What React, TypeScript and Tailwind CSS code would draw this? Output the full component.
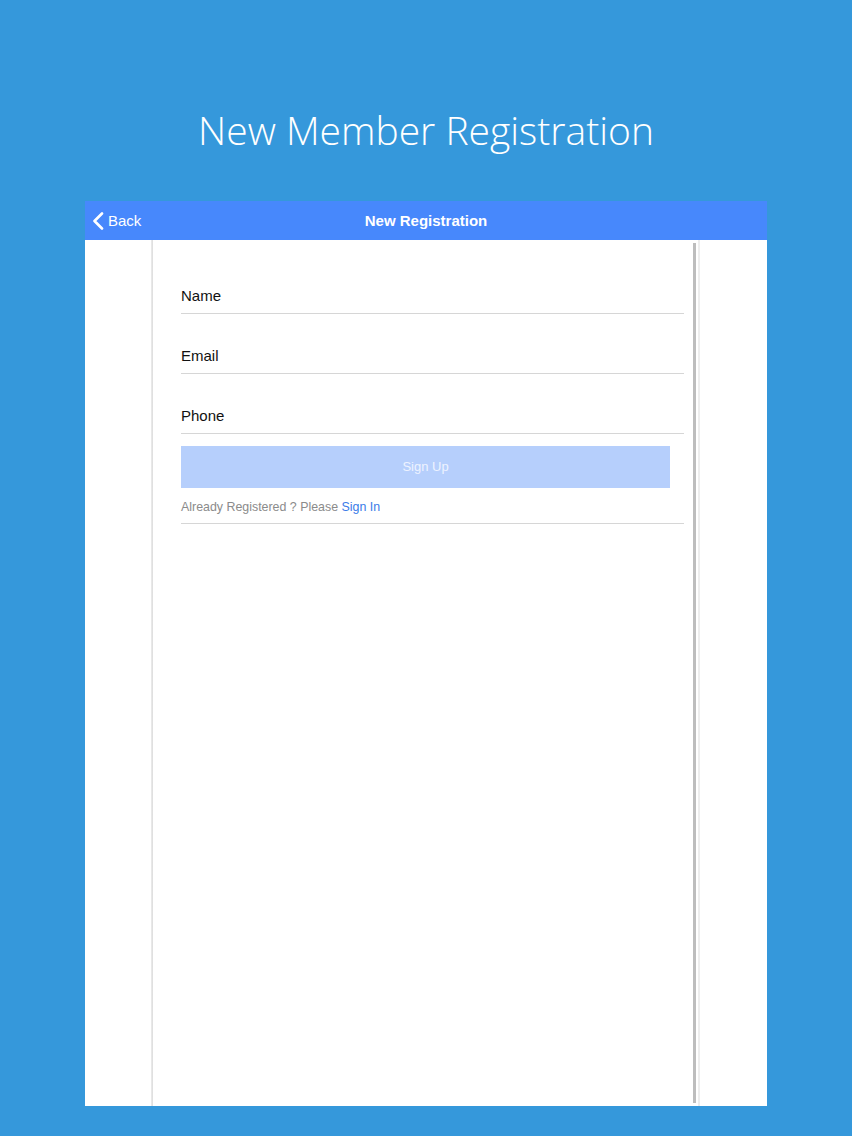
import React from "react";

export default function App() {
  const sans = { fontFamily: '"Liberation Sans", Arial, sans-serif' };
  return (
    <div className="w-[852px] h-[1136px] bg-[#3598db] flex flex-col items-center overflow-hidden">
      <h1
        className="mt-[100px] h-[60px] leading-[60px] text-[39px] font-light text-white"
        style={{ fontFamily: '"Open Sans", sans-serif' }}
      >
        New Member Registration
      </h1>
      <div className="mt-[41px] w-[682px] h-[905px] bg-white flex flex-col" style={sans}>
        <div className="relative h-[39px] pt-[2px] bg-[#4788fc] flex items-center justify-center">
          <div className="absolute left-[7px] top-0 h-full pt-[1px] flex items-center gap-[4px] text-white text-[15px]">
            <svg width="12" height="18" viewBox="0 0 12 18" fill="none">
              <path d="M10 1.5 L2.5 9 L10 16.5" stroke="white" strokeWidth="2.6" strokeLinecap="round" strokeLinejoin="round" />
            </svg>
            <span>Back</span>
          </div>
          <span className="text-white text-[15px] font-bold">New Registration</span>
        </div>
        <div className="flex-1 flex">
          <div className="w-[66px]" />
          <div className="w-[2px] bg-gradient-to-r from-[#ececec] to-[#dcdcdc]" />
          <div className="w-[540px] pl-[28px] pr-[9px] flex flex-col">
            <div className="mt-[14px]" />
            {["Name", "Email", "Phone"].map((l) => (
              <div key={l} className="pt-[33px] pb-[8px] border-b border-[#d6d6d6]">
                <div className="h-[18px] leading-[18px] text-[15px] text-[#111]">{l}</div>
              </div>
            ))}
            <div className="mt-[12px] w-[489px] h-[42px] bg-[#b6cffc] flex items-center justify-center text-[13px] text-[#eef3ff]">
              Sign Up
            </div>
            <div className="mt-[11px] pb-[8px] border-b border-[#d6d6d6] text-[12.4px] leading-[16px] text-[#8b8b8b]">
              Already Registered ? Please <span className="text-[#3a7ce8]">Sign In</span>
            </div>
          </div>
          <div className="w-[3px] py-[3px] flex">
            <div className="flex-1 bg-[#bdbdbd]" />
          </div>
          <div className="w-[2px]" />
          <div className="w-[2px] bg-[#ededed]" />
          <div className="w-[67px]" />
        </div>
      </div>
    </div>
  );
}
